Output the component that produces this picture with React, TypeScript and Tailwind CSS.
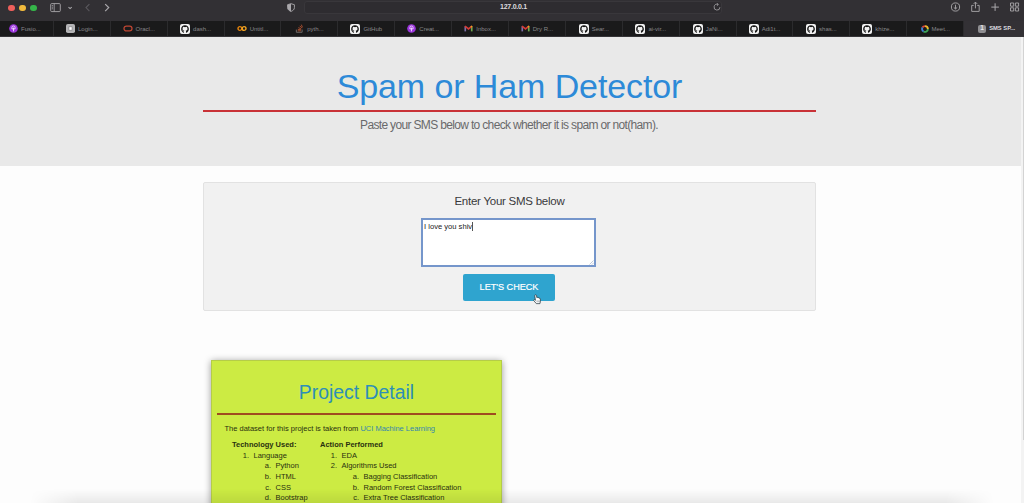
import { ReactNode } from "react";
import { FaGithub } from "react-icons/fa";

type IconKind = "purple" | "login" | "oracle" | "github" | "colab" | "stack" | "gmail" | "meet" | "one";

const tabs: { icon: IconKind; label: string }[] = [
  { icon: "purple", label: "Fusio..." },
  { icon: "login", label: "Login..." },
  { icon: "oracle", label: "Oracl..." },
  { icon: "github", label: "dash..." },
  { icon: "colab", label: "Untitl..." },
  { icon: "stack", label: "pyth..." },
  { icon: "github", label: "GitHub" },
  { icon: "purple", label: "Creat..." },
  { icon: "gmail", label: "Inbox..." },
  { icon: "gmail", label: "Dry R..." },
  { icon: "github", label: "Sear..." },
  { icon: "github", label: "ai-vir..." },
  { icon: "github", label: "JaNi..." },
  { icon: "github", label: "Adi1t..." },
  { icon: "github", label: "shas..." },
  { icon: "github", label: "khize..." },
  { icon: "meet", label: "Meet..." },
];

function TabIcon({ kind }: { kind: IconKind }) {
  switch (kind) {
    case "github":
      return (
        <span className="flex size-[10px] shrink-0 items-center justify-center rounded-[2px] bg-[#f2f2f2]">
          <FaGithub className="size-[8px] text-[#151515]" />
        </span>
      );
    case "purple":
      return (
        <svg viewBox="0 0 10 10" className="size-[9px] shrink-0">
          <circle cx="5" cy="5" r="4.8" fill="#9b35dc" />
          <path d="M3.2 5.4V4a1.8 1.8 0 0 1 3.6 0v1.4zM5 4v4.2" fill="none" stroke="#f0dcff" strokeWidth="1" />
        </svg>
      );
    case "login":
      return (
        <svg viewBox="0 0 10 10" className="size-[9px] shrink-0">
          <rect width="10" height="10" rx="2" fill="#b4b4b6" />
          <path d="M3.2 3h3.6v4H3.2z" fill="#fff" stroke="#77777a" strokeWidth=".7" />
        </svg>
      );
    case "oracle":
      return (
        <svg viewBox="0 0 10 7" className="h-[7px] w-[10px] shrink-0">
          <rect x="1" y="1.1" width="8" height="4.8" rx="2.4" fill="none" stroke="#bd4633" strokeWidth="1.3" />
        </svg>
      );
    case "colab":
      return (
        <svg viewBox="0 0 10 7" className="h-[7px] w-[10px] shrink-0" fill="none" strokeWidth="1.4">
          <circle cx="2.9" cy="3.5" r="1.9" stroke="#e8860c" />
          <circle cx="7.1" cy="3.5" r="1.9" stroke="#f3a422" />
        </svg>
      );
    case "stack":
      return (
        <svg viewBox="0 0 10 10" className="size-[9px] shrink-0" fill="none" strokeWidth="1">
          <path d="M1.5 6.2v3h6.4v-3" stroke="#77716d" />
          <path d="M3 7.6h3.6M3.1 5.9l3.6.6M3.8 4l3.2 1.6M5.2 2l2.5 2.5M7 .7l1.3 3" stroke="#b45331" />
        </svg>
      );
    case "gmail":
      return (
        <svg viewBox="0 0 10 8" className="h-[7px] w-[9px] shrink-0" fill="none" strokeWidth="1.9">
          <path d="M1.3 7.3V1.5" stroke="#7e70a8" />
          <path d="M8.7 7.3V1.5" stroke="#71a951" />
          <path d="M1 1.3l4 3.2 4-3.2" stroke="#d63a35" />
          <path d="M7.8 2.3L9 1.2" stroke="#eda21f" />
        </svg>
      );
    case "meet":
      return (
        <svg viewBox="0 0 10 10" className="size-[8px] shrink-0" fill="none" strokeWidth="2.4">
          <path d="M1.8 3.2A3.6 3.6 0 0 1 5 1.4" stroke="#d9473a" />
          <path d="M5 1.4A3.6 3.6 0 0 1 8.6 5" stroke="#efb92d" />
          <path d="M8.6 5A3.6 3.6 0 0 1 3.2 8.1" stroke="#3da556" />
          <path d="M3.2 8.1A3.6 3.6 0 0 1 1.8 3.2" stroke="#3f80d8" />
        </svg>
      );
    default:
      return (
        <span className="flex size-[8px] shrink-0 items-center justify-center rounded-[2px] bg-[#8f8e91] text-[6.5px] leading-none font-bold text-[#e8e8ea]">
          1
        </span>
      );
  }
}

function Toolbar() {
  return (
    <div className="flex h-[21px] shrink-0 items-center bg-[#323034] text-[#aaa8ac]">
      <div className="flex w-[50px] shrink-0 items-center gap-[4.5px] pb-[6px] pt-[1px] pl-[8px]">
        <span className="size-[6.5px] rounded-full bg-[#ee5f5b]" />
        <span className="size-[6.5px] rounded-full bg-[#f0b93c]" />
        <span className="size-[6.5px] rounded-full bg-[#35b549]" />
      </div>
      <svg viewBox="0 0 70 14" className="mb-[6px] h-[14px] w-[70px] shrink-0" fill="none" stroke="currentColor" strokeWidth=".9">
        <rect x=".7" y="2.6" width="9.6" height="8" rx="1" />
        <path d="M4.2 2.6v8M1.8 4.6h1.3M1.8 6.2h1.3M1.8 7.8h1.3" strokeWidth=".8" />
        <path d="M18.5 6.2l1.6 1.4 1.6-1.4" strokeWidth="1.1" />
        <path d="M39.4 3.1L36 6.6l3.4 3.5" stroke="#5a585d" strokeWidth="1.1" />
        <path d="M55.2 3.1l3.5 3.5-3.5 3.5" strokeWidth="1.2" />
      </svg>
      <div className="flex w-[184px] shrink-0 justify-end pr-[9px] pb-[6px]">
        <svg viewBox="0 0 8 9" className="h-[9px] w-[8px]">
          <path d="M4 .7L7.4 1.7v3C7.4 6.7 5.6 7.8 4 8.4 2.4 7.8.6 6.7.6 4.7v-3z" fill="none" stroke="currentColor" strokeWidth=".9" />
          <path d="M4 .7v7.7C2.4 7.8.6 6.7.6 4.7v-3z" fill="currentColor" />
        </svg>
      </div>
      <div className="mb-[7px] flex h-[13px] w-[418px] shrink-0 items-center rounded-[3px] border border-[#39373b] bg-[#2e2c30]">
        <span className="w-[418px] pl-[9px] text-center text-[7px] leading-[10px] font-bold tracking-[-0.25px] text-[#dddcdf]">127.0.0.1</span>
        <svg viewBox="0 0 8 8" className="size-[8px] shrink-0" fill="none" stroke="currentColor" strokeWidth=".8">
          <path d="M6.9 4.2A2.9 2.9 0 1 1 4.8 1.4M3.8.2l1.6 1.3-1.5 1.2" />
        </svg>
      </div>
      <svg viewBox="0 0 80 16" className="mb-[8px] ml-auto h-[16px] w-[80px] shrink-0" fill="none" stroke="currentColor" strokeWidth=".9">
        <circle cx="11.5" cy="8" r="4.1" />
        <path d="M11.5 5.7v4.2M9.8 8.4l1.7 1.6 1.7-1.6" />
        <path d="M29.7 6.4h-2v6h7.5v-6h-2M31.45 9.4V3.2M29.7 4.9l1.75-1.8 1.75 1.8" />
        <path d="M51.1 4.3v7.6M47.3 8.1h7.6" strokeWidth="1" />
        <path d="M66.5 4h3.2v3.2h-3.2zM71.4 4h3.2v3.2h-3.2zM66.5 8.8h3.2V12h-3.2zM71.4 8.8h3.2V12h-3.2z" />
      </svg>
    </div>
  );
}

function TabBar() {
  return (
    <div className="flex h-[16px] shrink-0 border-b border-[#353437] bg-[#1a1a1b]">
      {tabs.map((tab, i) => (
        <div
          key={i}
          className="flex w-[56.9px] shrink-0 items-center justify-center gap-[3px] border-r border-[#2b2b2d] text-[6px] leading-none whitespace-nowrap text-[#88878a] first:-ml-[3px]"
        >
          <TabIcon kind={tab.icon} />
          <span>{tab.label}</span>
        </div>
      ))}
      <div className="flex grow items-center gap-[3px] bg-[#333135] pl-[14px] text-[5.8px] leading-none font-bold whitespace-nowrap text-[#dedde0]">
        <TabIcon kind="one" />
        <span>SMS SP...</span>
      </div>
    </div>
  );
}

function Item({ mark, children }: { mark: string; children: ReactNode }) {
  return (
    <li className="flex whitespace-nowrap">
      <span className="w-[18.5px] shrink-0 pr-[4.5px] text-right">{mark}</span>
      <span>{children}</span>
    </li>
  );
}

export default function App() {
  return (
    <div className="relative flex h-[503px] w-full flex-col overflow-hidden bg-[#fdfdfd] font-['Liberation_Sans',Arial,sans-serif] text-[#333]">
      <Toolbar />
      <TabBar />
      <header className="h-[129px] shrink-0 bg-[#e9e9e9] px-[203px]">
        <div className="w-[613px] text-center">
          <h1 className="h-[75px] border-b-2 border-[#c93237] pt-[29px] text-[34px] leading-[40px] tracking-[-0.1px] text-[#2d8ad8]">Spam or Ham Detector</h1>
          <p className="pt-[6px] pr-[1px] text-[12px] leading-[14px] tracking-[-0.66px] whitespace-nowrap text-[#69696b]">
            Paste your SMS below to check whether it is spam or not(ham).
          </p>
        </div>
      </header>
      <main className="ml-[203px] flex w-[613px] shrink-0 flex-col pt-[16px]">
        <section className="flex h-[129px] shrink-0 flex-col items-center rounded-[2px] border border-[#e2e2e2] bg-[#f1f1f1] pt-[11px]">
          <label className="text-[11.5px] leading-[14px] tracking-[-0.25px] text-[#39393b]">Enter Your SMS below</label>
          <div className="mt-[10px] mr-[2px] flex h-[49px] w-[175px] justify-between border-2 border-[#7596cb] bg-white pt-[2px] pl-px text-[7.6px] leading-[9px] text-[#222]">
            <span className="h-[9px] border-r border-[#555]">I love you shiv</span>
            <svg viewBox="0 0 5 5" className="size-[5px] self-end" stroke="#a5b3c8" strokeWidth=".7">
              <path d="M.5 4.5l4-4M2.8 4.7l2-2" />
            </svg>
          </div>
          <button className="relative mt-[7px] mr-px h-[27px] w-[92px] rounded-[2px] bg-[#2fa4cf] text-[9.1px] leading-[27px] text-white [-webkit-text-stroke:0.2px_white]">
            LET'S CHECK
            <svg viewBox="0 0 10 12" className="absolute top-[20px] left-[69px] h-[11px] w-[10px]">
              <path
                d="M3.2 1c.8-.3 1.2.2 1.3.8l.3 2.1c.5-.4 1-.2 1.2.2.6-.3 1.1 0 1.3.4.7-.2 1.2.2 1.3.9l.2 2.4-.6 2.7H4.3L1.5 7.2C1 6.4 1.8 5.8 2.5 6.3l.8.6-.7-4.6C2.4 1.6 2.7 1.2 3.2 1z"
                fill="#fff"
                stroke="#24333b"
                strokeWidth=".8"
              />
              <path d="M5 7v2M6.3 7v2M7.6 7v2" stroke="#53616a" strokeWidth=".5" />
            </svg>
          </button>
        </section>
        <section className="mt-[49px] ml-[8px] h-[200px] w-[291px] shrink-0 border border-[#b5cd48] bg-[#cceb43] px-[5px] text-[7.5px] leading-[10.67px] text-[#29300f] shadow-[0_1px_7px_rgba(0,0,0,0.4)]">
          <h2 className="h-[54px] border-b-2 border-[#9f4b20] pt-[19px] text-center text-[19.4px] leading-[24px] text-[#2d8fb8]">Project Detail</h2>
          <p className="pt-[9px] pl-[7.5px] whitespace-nowrap">
            The dataset for this project is taken from <span className="text-[#3587ad]">UCI Machine Learning</span>
          </p>
          <div className="flex pt-[5.4px] pl-[15px]">
            <div className="w-[88px] shrink-0">
              <h3 className="font-bold">Technology Used:</h3>
              <ol className="pl-[3px]">
                <Item mark="1.">Language</Item>
              </ol>
              <ol className="pl-[25px]">
                <Item mark="a.">Python</Item>
                <Item mark="b.">HTML</Item>
                <Item mark="c.">CSS</Item>
                <Item mark="d.">Bootstrap</Item>
              </ol>
            </div>
            <div>
              <h3 className="font-bold">Action Performed</h3>
              <ol className="pl-[3px]">
                <Item mark="1.">EDA</Item>
                <Item mark="2.">Algorithms Used</Item>
              </ol>
              <ol className="pl-[25px]">
                <Item mark="a.">Bagging Classification</Item>
                <Item mark="b.">Random Forest Classification</Item>
                <Item mark="c.">Extra Tree Classification</Item>
              </ol>
            </div>
          </div>
        </section>
      </main>
      <div className="absolute top-[37px] right-0 h-[466px] w-[3px] bg-[#f3f3f3]">
        <div className="ml-auto h-[403px] w-px bg-[#d3d3d3]" />
      </div>
      <div className="absolute bottom-0 left-[30px] h-[14px] w-[964px] bg-linear-to-b from-transparent to-black/8 mask-x-from-95% mask-x-to-100%" />
    </div>
  );
}
